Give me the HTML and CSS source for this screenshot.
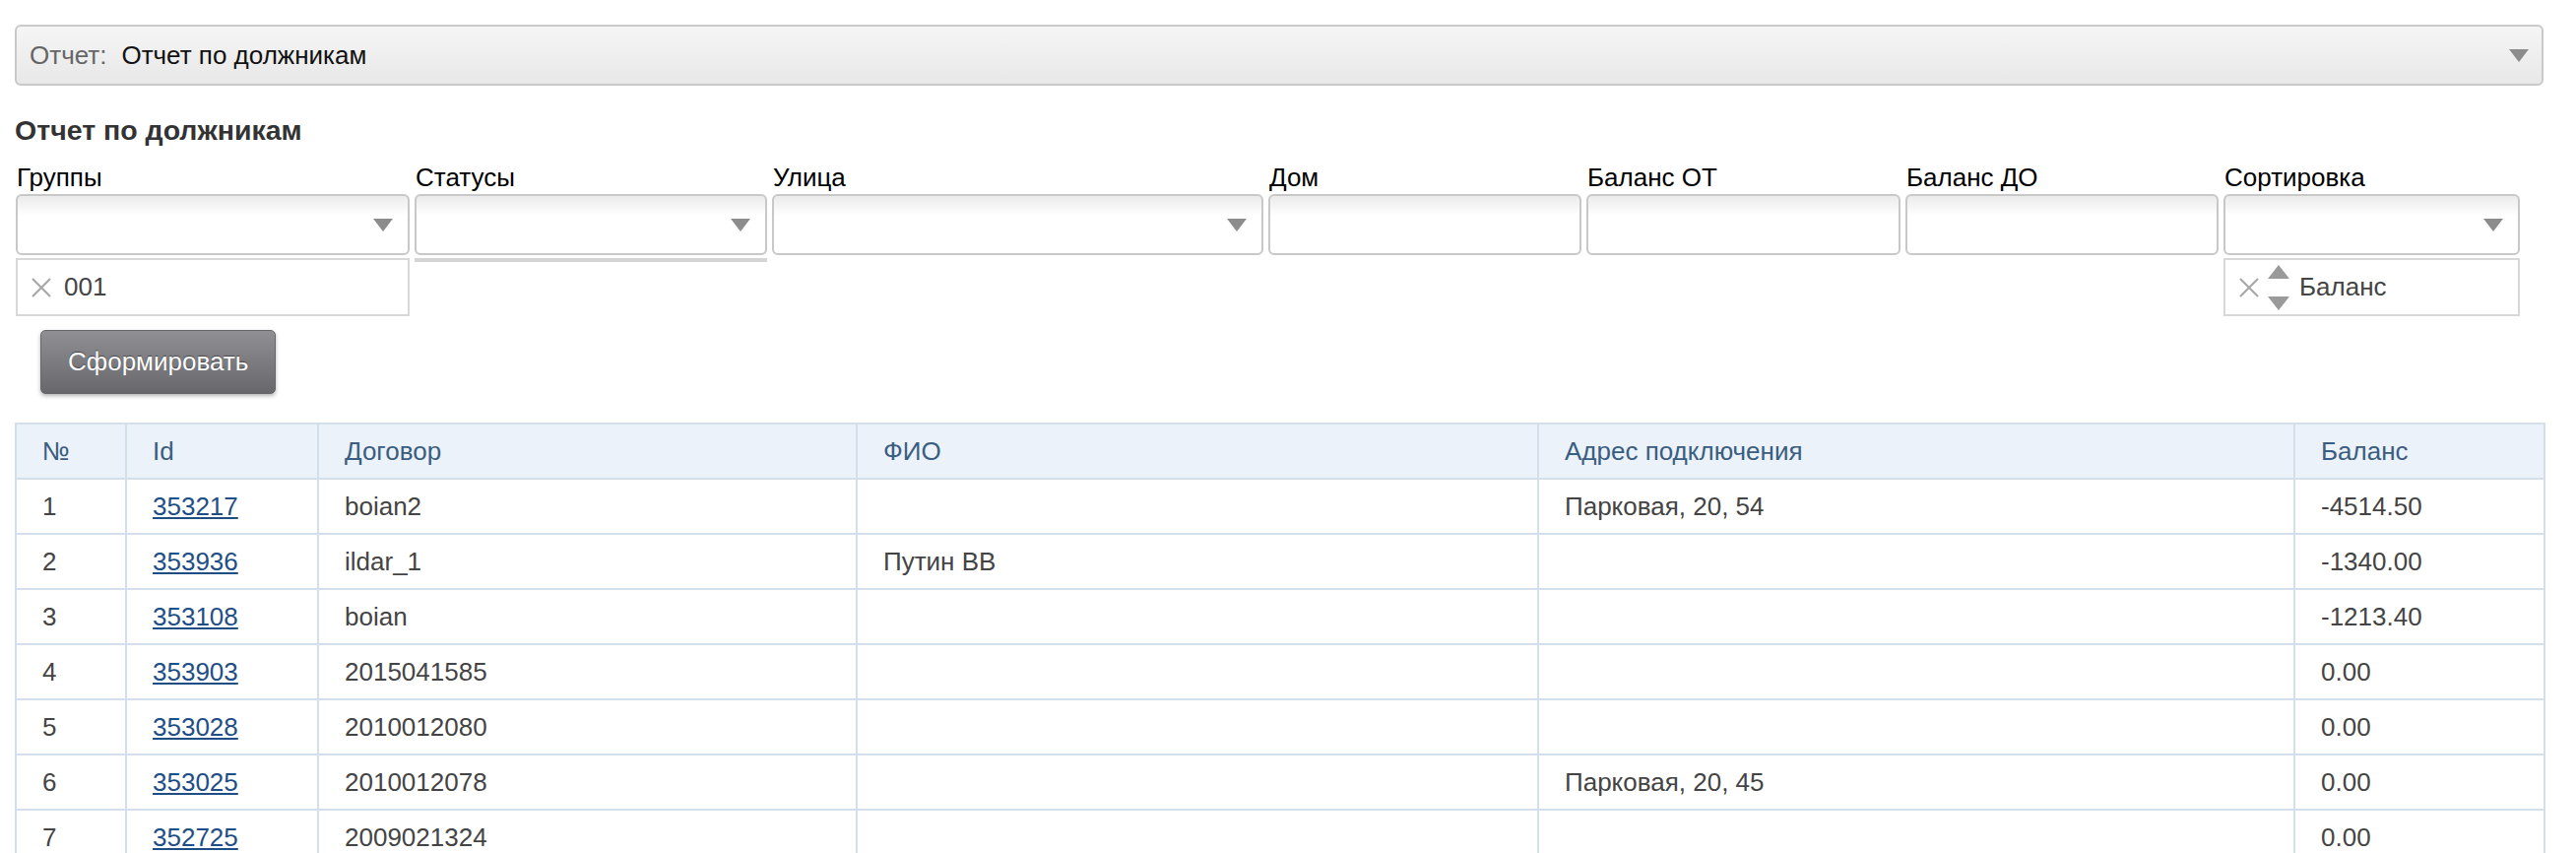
FILE: index.html
```
<!DOCTYPE html>
<html lang="ru">
<head>
<meta charset="utf-8">
<title>Отчет по должникам</title>
<link rel="stylesheet" href="styles.css">
</head>
<body>
<div class="page">
  <div class="report-select">
    <span class="rs-label">Отчет:</span>
    <span class="rs-value">Отчет по должникам</span>
    <span class="arrow"></span>
  </div>

  <h1 class="title">Отчет по должникам</h1>

  <div class="filters">
    <div class="field w-groups">
      <label>Группы</label>
      <div class="control select"><span class="arrow"></span></div>
      <div class="chip">
        <svg class="x" width="22" height="22" viewBox="0 0 22 22"><path d="M2 2 L20 20 M20 2 L2 20" stroke="#a8a8a8" stroke-width="2.2" fill="none"/></svg>
        <span class="chip-text">001</span>
      </div>
    </div>
    <div class="field w-status">
      <label>Статусы</label>
      <div class="control select"><span class="arrow"></span></div>
      <div class="status-bar"></div>
    </div>
    <div class="field w-street">
      <label>Улица</label>
      <div class="control select"><span class="arrow"></span></div>
    </div>
    <div class="field w-house">
      <label>Дом</label>
      <div class="control"></div>
    </div>
    <div class="field w-from">
      <label>Баланс ОТ</label>
      <div class="control"></div>
    </div>
    <div class="field w-to">
      <label>Баланс ДО</label>
      <div class="control"></div>
    </div>
    <div class="field w-sort">
      <label>Сортировка</label>
      <div class="control select"><span class="arrow"></span></div>
      <div class="chip">
        <svg class="x" width="22" height="22" viewBox="0 0 22 22"><path d="M2 2 L20 20 M20 2 L2 20" stroke="#a8a8a8" stroke-width="2.2" fill="none"/></svg>
        <svg class="updown" width="22" height="46" viewBox="0 0 22 46"><path d="M11 0 L22 14 L0 14 Z" fill="#9a9a9a"/><path d="M0 32 L22 32 L11 46 Z" fill="#9a9a9a"/></svg>
        <span class="chip-text">Баланс</span>
      </div>
    </div>
  </div>

  <button class="btn" type="button">Сформировать</button>

  <table class="grid">
    <colgroup>
      <col class="c-num"><col class="c-id"><col class="c-contract"><col class="c-fio"><col class="c-addr"><col class="c-bal">
    </colgroup>
    <thead>
      <tr><th>№</th><th>Id</th><th>Договор</th><th>ФИО</th><th>Адрес подключения</th><th>Баланс</th></tr>
    </thead>
    <tbody>
      <tr><td>1</td><td><a href="#">353217</a></td><td>boian2</td><td></td><td>Парковая, 20, 54</td><td>-4514.50</td></tr>
      <tr><td>2</td><td><a href="#">353936</a></td><td>ildar_1</td><td>Путин ВВ</td><td></td><td>-1340.00</td></tr>
      <tr><td>3</td><td><a href="#">353108</a></td><td>boian</td><td></td><td></td><td>-1213.40</td></tr>
      <tr><td>4</td><td><a href="#">353903</a></td><td>2015041585</td><td></td><td></td><td>0.00</td></tr>
      <tr><td>5</td><td><a href="#">353028</a></td><td>2010012080</td><td></td><td></td><td>0.00</td></tr>
      <tr><td>6</td><td><a href="#">353025</a></td><td>2010012078</td><td></td><td>Парковая, 20, 45</td><td>0.00</td></tr>
      <tr><td>7</td><td><a href="#">352725</a></td><td>2009021324</td><td></td><td></td><td>0.00</td></tr>
    </tbody>
  </table>
</div>
</body>
</html>
```
FILE: styles.css
```
html, body {
  margin: 0;
  padding: 0;
  background: #fff;
}
body {
  font-family: "Liberation Sans", Arial, Helvetica, sans-serif;
  font-size: 26px;
  color: #000;
}
.page {
  padding: 25px 33px 0 15px;
}

.report-select {
  display: flex;
  align-items: center;
  height: 58px;
  border: 2px solid #c9c9c9;
  border-radius: 6px;
  background: linear-gradient(#f5f5f5, #e8e8e8);
  padding: 0 13px 0 13px;
}
.rs-label {
  color: #666;
  margin-right: 15px;
}
.rs-value {
  color: #111;
  flex: 1;
}
.arrow {
  width: 0;
  height: 0;
  border-left: 10px solid transparent;
  border-right: 10px solid transparent;
  border-top: 13px solid #8c8c8c;
}

.title {
  margin: 29px 0 0 0;
  font-size: 28.5px;
  line-height: 32px;
  font-weight: bold;
  color: #333;
}

.filters {
  display: flex;
  gap: 5px;
  margin: 17px 0 0 1px;
  align-items: flex-start;
}
.field {
  display: flex;
  flex-direction: column;
}
.field label {
  line-height: 30px;
  margin-bottom: 2px;
  padding-left: 1px;
  white-space: nowrap;
}
.w-groups { width: 400px; }
.w-status { width: 358px; }
.w-street { width: 499px; }
.w-house { width: 318px; }
.w-from { width: 319px; }
.w-to { width: 318px; }
.w-sort { width: 301px; }

.control {
  height: 58px;
  border: 2px solid #c8c8c8;
  border-radius: 6px;
  background: linear-gradient(#ebebeb, #ffffff 20px);
}
.select {
  display: flex;
  align-items: center;
  justify-content: flex-end;
  padding-right: 15px;
}

.chip {
  margin-top: 3px;
  height: 55px;
  border: 2px solid #d8d8d8;
  display: flex;
  align-items: center;
  padding-left: 13px;
  color: #444;
}
.chip .x {
  flex: none;
  margin-right: 12px;
}
.w-sort .chip .x {
  margin-right: 8px;
}
.chip .updown {
  flex: none;
  margin-right: 10px;
}
.status-bar {
  margin-top: 3px;
  height: 4px;
  background: #d4d4d4;
}

.btn {
  display: block;
  margin: 14px 0 0 26px;
  height: 65px;
  padding: 0 27px;
  font-family: inherit;
  font-size: 26px;
  color: #fff;
  text-shadow: 0 -1px 1px rgba(0, 0, 0, 0.45);
  border: 1px solid #66666a;
  border-radius: 5px;
  background: linear-gradient(#909094, #68686c);
  box-shadow: 0 2px 4px rgba(0, 0, 0, 0.3);
}

.grid {
  margin-top: 29px;
  border-collapse: collapse;
  table-layout: fixed;
  width: 2568px;
}
.c-num { width: 112px; }
.c-id { width: 195px; }
.c-contract { width: 547px; }
.c-fio { width: 692px; }
.c-addr { width: 768px; }
.c-bal { width: 254px; }

.grid th, .grid td {
  border: 2px solid #d3dfea;
  height: 54px;
  padding: 0 26px;
  text-align: left;
  vertical-align: middle;
  font-size: 26px;
  white-space: nowrap;
}
.grid th {
  background: #ebf2f9;
  color: #3a5d80;
  font-weight: normal;
}
.grid td {
  color: #444;
}
.grid a {
  color: #1f4e86;
  text-decoration: underline;
}
```
